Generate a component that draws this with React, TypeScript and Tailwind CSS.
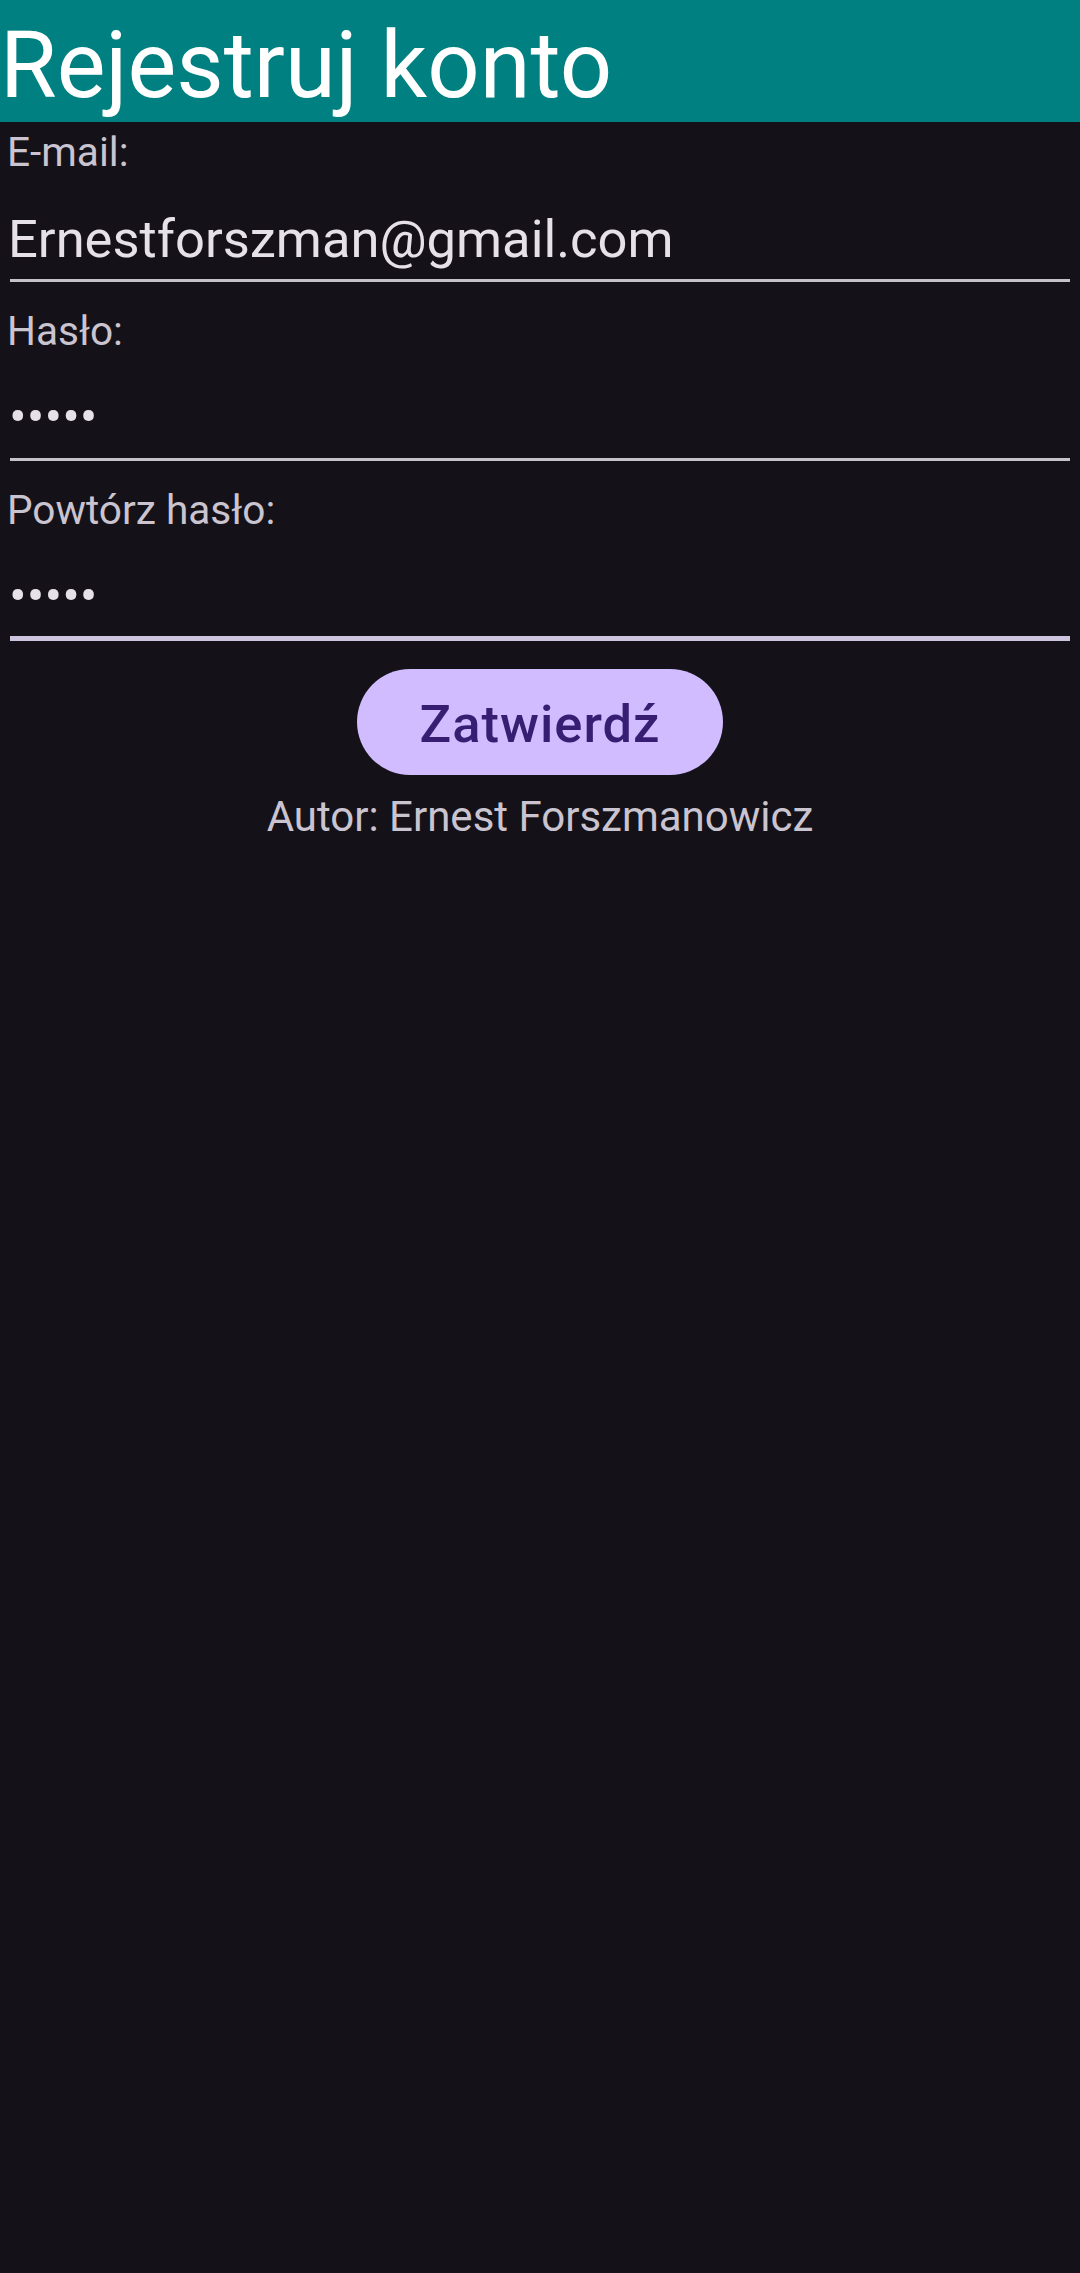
import React from "react";

const font = { fontFamily: "Roboto, 'Noto Sans', 'Liberation Sans', sans-serif" };

function Field({ label, value, password, focused, first }: { label: string; value: string; password?: boolean; focused?: boolean; first?: boolean }) {
  return (
    <div className={first ? "pt-[4px]" : "pt-[23px]"}>
      <div className="h-[52px] pl-[7px] text-[40.6px] leading-[52px] text-[#cac4d0] whitespace-nowrap">{label}</div>
      <div className="pt-[29.5px] pl-[8px] h-[91.5px]">
        <div className={"text-[52.5px] leading-[62px] text-[#e6e0e9] whitespace-nowrap" + (password ? " pl-[1px]" : "")}>{value}</div>
      </div>
      <div className="pt-[9.3px] px-[10px]">
        <div className={focused ? "h-[5px] bg-[#cdc5de]" : "h-[3px] bg-[#c6c2c9]"} />
      </div>
    </div>
  );
}

export default function App() {
  return (
    <div className="min-h-[2273px] w-full bg-[#141218]" style={font}>
      <div className="h-[122px] bg-[#008080]">
        <div className="pt-[12px] text-[92px] leading-[108px] text-white whitespace-nowrap">Rejestruj konto</div>
      </div>
      <Field first label="E-mail:" value="Ernestforszman@gmail.com" />
      <Field label="Hasło:" value="•••••" password />
      <Field label="Powtórz hasło:" value="•••••" password focused />
      <div className="flex justify-center pt-[28px]">
        <button className="flex h-[106px] items-center justify-center rounded-full bg-[#d0bcff] px-[63px] pt-[3px] text-[52.5px] font-medium leading-[62px] tracking-[1px] text-[#381e72]">
          Zatwierdź
        </button>
      </div>
      <div className="pt-[14.3px] text-center text-[42px] leading-[54px] text-[#cac4d0] whitespace-nowrap">Autor: Ernest Forszmanowicz</div>
    </div>
  );
}
